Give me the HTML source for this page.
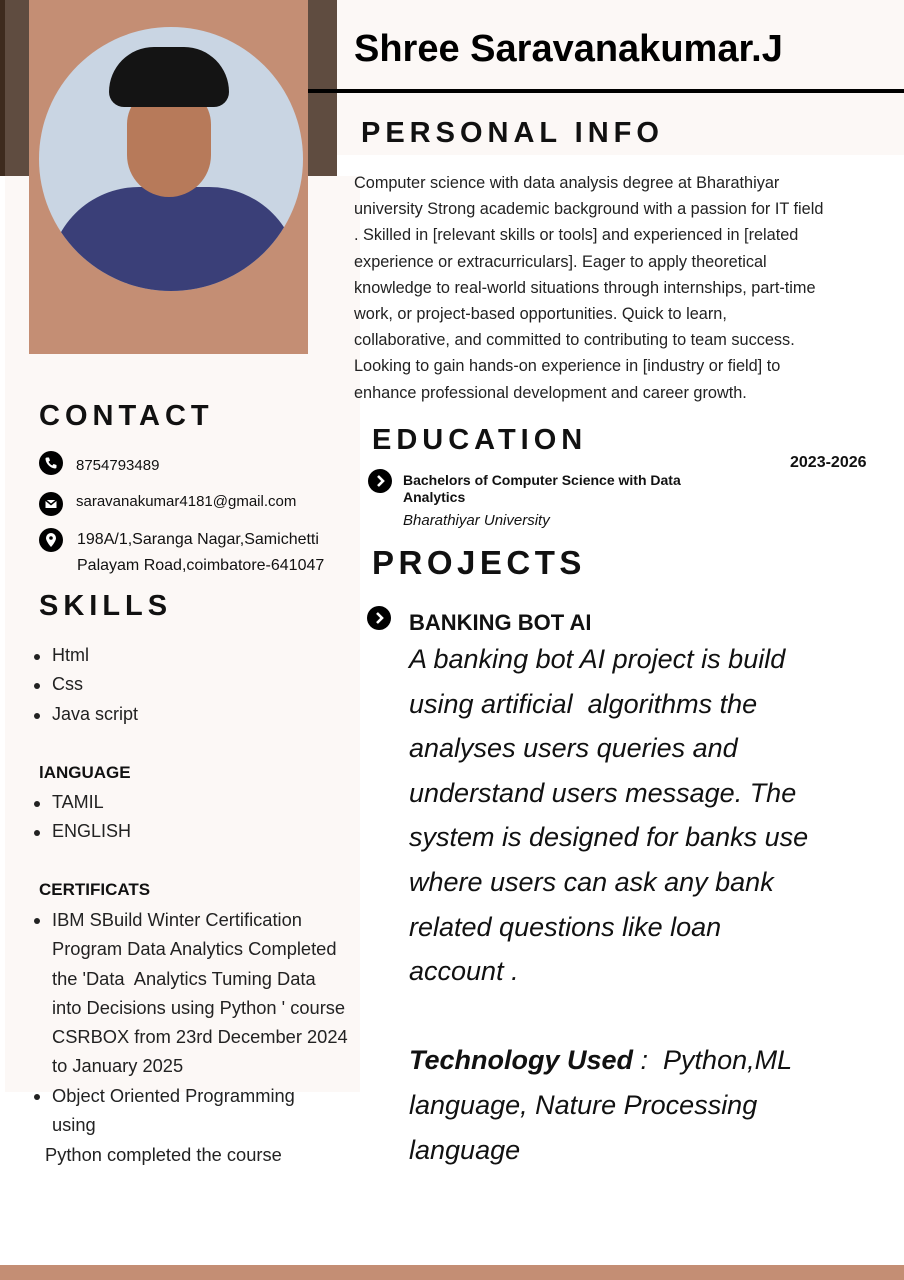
<!DOCTYPE html>
<html><head><meta charset="utf-8"><style>
*{margin:0;padding:0;box-sizing:border-box}
body{width:904px;height:1280px;position:relative;background:#fff;font-family:"Liberation Sans",sans-serif;color:#111;overflow:hidden}
.a{position:absolute}
.h{font-weight:bold;letter-spacing:5px;font-size:29px;color:#111;white-space:nowrap}
.t{font-size:16.3px;line-height:26.2px;color:#222;white-space:nowrap}
ul{list-style:none}
li{position:relative;padding-left:47px;font-size:18px;line-height:29.3px;color:#222;white-space:nowrap}
li:before{content:"";position:absolute;left:29px;top:13px;width:6px;height:6px;border-radius:50%;background:#222}
.ic{position:absolute;width:24px;height:24px}
.it{font-style:italic;font-size:27px;line-height:44.6px;color:#111;white-space:nowrap}
</style></head><body>
<div class="a" style="left:5px;top:176px;width:355px;height:916px;background:#fcf8f6"></div>
<div class="a" style="left:337px;top:0;width:567px;height:155px;background:#fcf8f6"></div>
<div class="a" style="left:0;top:0;width:5px;height:176px;background:#3e2b1e"></div>
<div class="a" style="left:5px;top:0;width:25px;height:176px;background:#5f4c40"></div>
<div class="a" style="left:308px;top:0;width:29px;height:176px;background:#5f4c40"></div>
<div class="a" style="left:29px;top:0;width:279px;height:354px;background:#c48e74"></div>
<div class="a" style="left:39px;top:27px;width:264px;height:264px;border-radius:50%;overflow:hidden;background:#c9d5e3">
 <div class="a" style="left:10px;top:160px;width:250px;height:130px;background:#3a3f78;border-radius:90px 90px 0 0"></div>
 <div class="a" style="left:88px;top:60px;width:84px;height:110px;background:#b77a5a;border-radius:40px 40px 45px 45px"></div>
 <div class="a" style="left:70px;top:20px;width:120px;height:60px;background:#141414;border-radius:60px 60px 20px 20px"></div>
</div>
<div class="a" style="left:354px;top:28px;font-size:38px;font-weight:bold;color:#000">Shree Saravanakumar.J</div>
<div class="a" style="left:308px;top:89px;width:596px;height:4px;background:#000"></div>
<div class="a h" style="left:361px;top:117px">PERSONAL INFO</div>
<div class="a t" style="left:354px;top:170px">Computer science with data analysis degree at Bharathiyar<br>university Strong academic background with a passion for IT field<br>. Skilled in [relevant skills or tools] and experienced in [related<br>experience or extracurriculars]. Eager to apply theoretical<br>knowledge to real-world situations through internships, part-time<br>work, or project-based opportunities. Quick to learn,<br>collaborative, and committed to contributing to team success.<br>Looking to gain hands-on experience in [industry or field] to<br>enhance professional development and career growth.</div>
<div class="a h" style="left:39px;top:400px">CONTACT</div>
<svg class="ic" style="left:39px;top:451px" viewBox="0 0 24 24"><circle cx="12" cy="12" r="12"/><path d="M8 6.5l2 0 1 3-1.5 1.2a8 8 0 0 0 3.8 3.8l1.2-1.5 3 1 0 2a1.5 1.5 0 0 1-1.6 1.5A11 11 0 0 1 6.5 8.1 1.5 1.5 0 0 1 8 6.5z" fill="#fff"/></svg>
<div class="a" style="left:76px;top:457px;font-size:15px">8754793489</div>
<svg class="ic" style="left:39px;top:492px" viewBox="0 0 24 24"><circle cx="12" cy="12" r="12"/><rect x="6.5" y="8" width="11" height="8" fill="#fff"/><path d="M6.5 8l5.5 4.5L17.5 8" stroke="#000" stroke-width="1.5" fill="none"/></svg>
<div class="a" style="left:76px;top:493px;font-size:15px">saravanakumar4181@gmail.com</div>
<svg class="ic" style="left:39px;top:528px" viewBox="0 0 24 24"><circle cx="12" cy="12" r="12"/><path d="M12 19s-5-5.5-5-9a5 5 0 0 1 10 0c0 3.5-5 9-5 9z" fill="#fff"/><circle cx="12" cy="10" r="1.8"/></svg>
<div class="a" style="left:77px;top:527px;font-size:16px;line-height:26px;white-space:nowrap">198A/1,Saranga Nagar,Samichetti<br>Palayam Road,coimbatore-641047</div>
<div class="a h" style="left:39px;top:590px">SKILLS</div>
<ul class="a" style="left:5px;top:641px"><li>Html</li><li>Css</li><li>Java script</li></ul>
<div class="a" style="left:39px;top:763px;font-size:17px;font-weight:bold">lANGUAGE</div>
<ul class="a" style="left:5px;top:788px"><li>TAMIL</li><li>ENGLISH</li></ul>
<div class="a" style="left:39px;top:880px;font-size:17px;font-weight:bold">CERTIFICATS</div>
<ul class="a" style="left:5px;top:905px"><li style="font-size:18.3px">IBM SBuild Winter Certification<br>Program Data Analytics Completed<br>the 'Data&nbsp; Analytics Tuming Data<br>into Decisions using Python ' course<br>CSRBOX from 23rd December 2024<br>to January 2025</li><li style="font-size:18.3px">Object Oriented Programming<br>using</li></ul>
<div class="a" style="left:45px;top:1144px;font-size:18.3px;color:#222">Python completed the course</div>
<div class="a h" style="left:372px;top:424px">EDUCATION</div>
<div class="a" style="left:790px;top:454px;font-size:16px;font-weight:bold">2023-2026</div>
<svg class="ic" style="left:368px;top:469px" viewBox="0 0 24 24"><circle cx="12" cy="12" r="12"/><path d="M10 7l5 5-5 5" stroke="#fff" stroke-width="2.6" fill="none"/></svg>
<div class="a" style="left:403px;top:472px;font-size:14px;font-weight:bold;line-height:17px;white-space:nowrap">Bachelors of Computer Science with Data<br>Analytics</div>
<div class="a" style="left:403px;top:512px;font-size:15px;font-style:italic">Bharathiyar University</div>
<div class="a h" style="left:372px;top:544px;font-size:33px;letter-spacing:4.5px">PROJECTS</div>
<svg class="ic" style="left:367px;top:606px" viewBox="0 0 24 24"><circle cx="12" cy="12" r="12"/><path d="M10 7l5 5-5 5" stroke="#fff" stroke-width="2.6" fill="none"/></svg>
<div class="a" style="left:409px;top:610px;font-size:22px;font-weight:bold;color:#111">BANKING BOT AI</div>
<div class="a it" style="left:409px;top:637px">A banking bot AI project is build<br>using artificial&nbsp; algorithms the<br>analyses users queries and<br>understand users message. The<br>system is designed for banks use<br>where users can ask any bank<br>related questions like loan<br>account .<br><br><b>Technology Used</b> :&nbsp; Python,ML<br>language, Nature Processing<br>language</div>
<div class="a" style="left:0;top:1265px;width:904px;height:15px;background:#c48e74"></div>
</body></html>
